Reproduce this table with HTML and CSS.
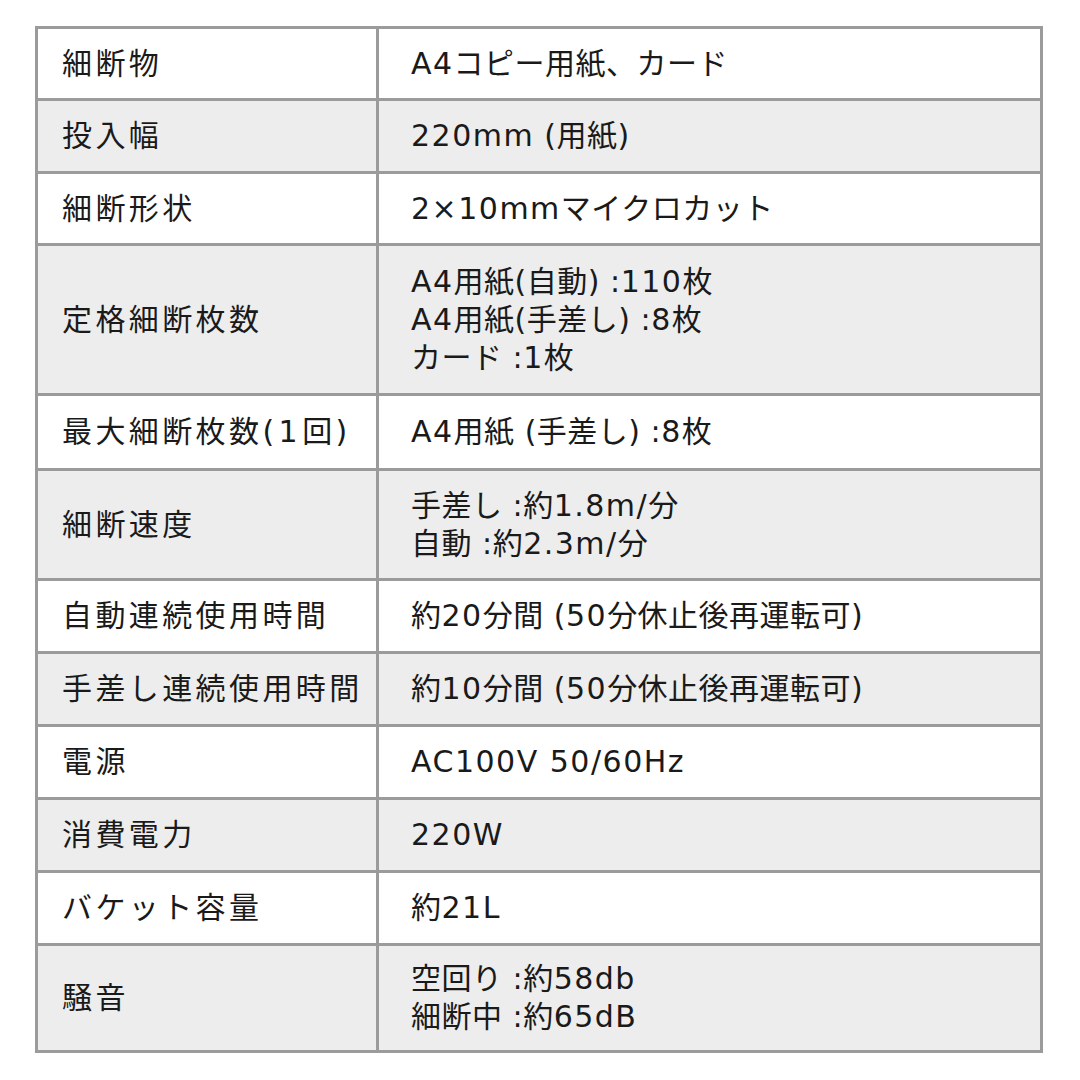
FILE: index.html
```html
<!DOCTYPE html>
<html lang="ja">
<head>
<meta charset="utf-8">
<link rel="stylesheet" href="styles.css">
</head>
<body>
<div class="spec">
  <div class="row r69 odd"><div class="k">細断物</div><div class="v"><div class="tx"><span class="lt">A4</span>コピー用紙、カード</div></div></div>
  <div class="row r70 even"><div class="k">投入幅</div><div class="v"><div class="tx"><span class="lt">220mm</span> (用紙)</div></div></div>
  <div class="row r69 odd"><div class="k">細断形状</div><div class="v"><div class="tx"><span class="lt">2×10mm</span>マイクロカット</div></div></div>
  <div class="row r147 even"><div class="k">定格細断枚数</div><div class="v"><div class="tx"><span class="lt">A4</span>用紙(自動) :<span class="lt">110</span>枚<br><span class="lt">A4</span>用紙(手差し) :<span class="lt">8</span>枚<br>カード :<span class="lt">1</span>枚</div></div></div>
  <div class="row r72 odd"><div class="k"><div class="tx">最大細断枚数<span class="lk">(1</span>回)</div></div><div class="v"><div class="tx"><span class="lt">A4</span>用紙 (手差し) :<span class="lt">8</span>枚</div></div></div>
  <div class="row r107 even"><div class="k">細断速度</div><div class="v"><div class="tx">手差し :約<span class="lt">1.8m/</span>分<br>自動 :約<span class="lt">2.3m/</span>分</div></div></div>
  <div class="row r70 odd"><div class="k">自動連続使用時間</div><div class="v"><div class="tx">約<span class="lt">20</span>分間 (<span class="lt">50</span>分休止後再運転可)</div></div></div>
  <div class="row r70 even"><div class="k">手差し連続使用時間</div><div class="v"><div class="tx">約<span class="lt">10</span>分間 (<span class="lt">50</span>分休止後再運転可)</div></div></div>
  <div class="row r70 odd"><div class="k">電源</div><div class="v"><div class="tx"><span class="lt">AC100V 50/60Hz</span></div></div></div>
  <div class="row r70 even"><div class="k">消費電力</div><div class="v"><div class="tx"><span class="lt">220W</span></div></div></div>
  <div class="row r70 odd"><div class="k">バケット容量</div><div class="v"><div class="tx">約<span class="lt">21L</span></div></div></div>
  <div class="row r104 even"><div class="k">騒音</div><div class="v"><div class="tx">空回り :約<span class="lt">58db</span><br>細断中 :約<span class="lt">65dB</span></div></div></div>
</div>
</body>
</html>
```

FILE: styles.css
```css
html, body {
  margin: 0;
  padding: 0;
  background: #ffffff;
}
body {
  padding: 26px 0 0 35px;
  font-family: "DejaVu Sans", "Noto Sans CJK JP", sans-serif;
  color: #1a1a1a;
  font-size: 30px;
}
.spec {
  width: 1008px;
  box-sizing: border-box;
  background: #9b9b9b;
  padding: 3px;
  display: flex;
  flex-direction: column;
  gap: 3px;
}
.row {
  display: grid;
  grid-template-columns: 338px 1fr;
  gap: 3px;
}
.row > div {
  display: flex;
  align-items: center;
  line-height: 38px;
  white-space: nowrap;
}
.odd > div { background: #ffffff; }
.even > div { background: #ededed; }
.k {
  padding-left: 24px;
  letter-spacing: 3.4px;
}
.lk {
  letter-spacing: 4.5px;
}
.v {
  padding-left: 32px;
  letter-spacing: 0.5px;
}
.lt {
  letter-spacing: 1.5px;
}
.r69 { height: 69px; }
.r70 { height: 70px; }
.r72 { height: 72px; }
.r147 { height: 147px; }
.r107 { height: 107px; }
.r104 { height: 104px; }
```
